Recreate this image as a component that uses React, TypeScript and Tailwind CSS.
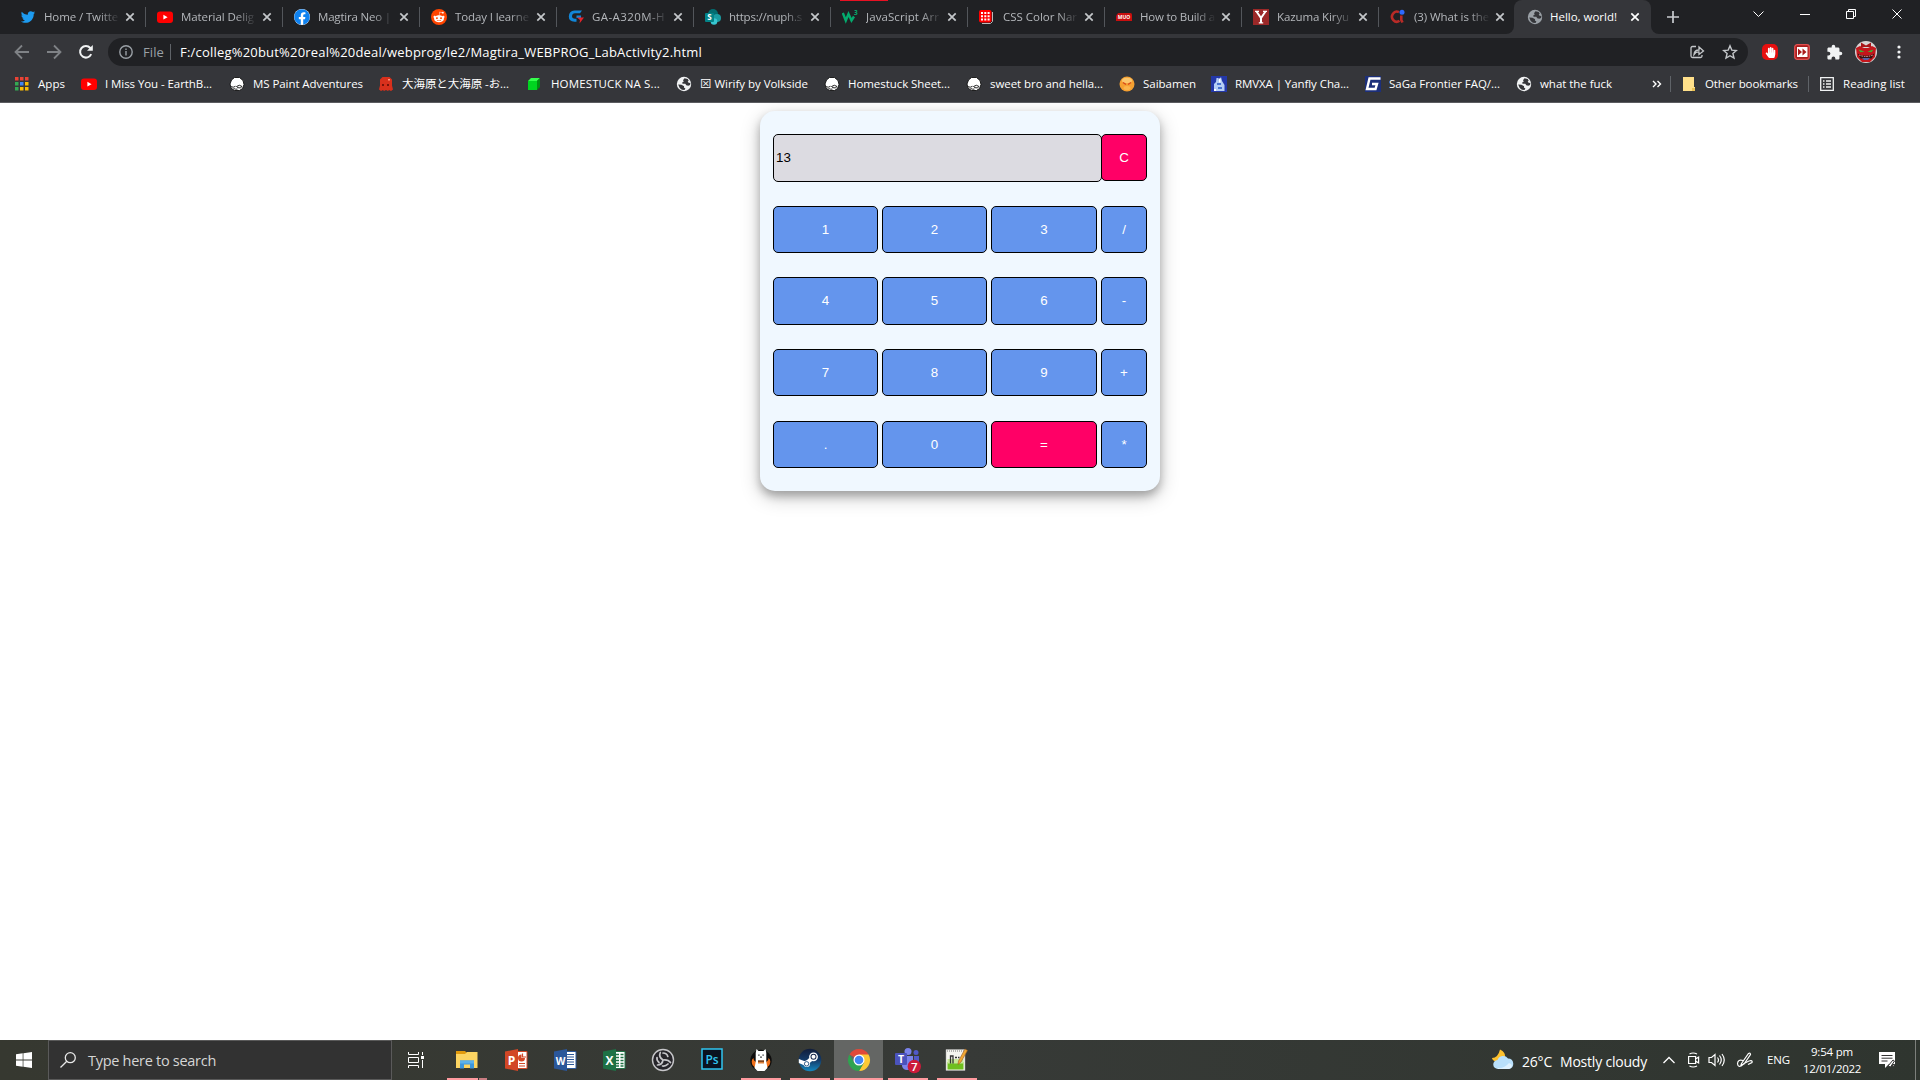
import React, { useLayoutEffect, useRef, useState } from "react";
import { FaFacebook, FaRedditAlien, FaTwitter, FaHandPaper } from "react-icons/fa";

/* Text set to a given width by spreading the difference over its letters. */
function Fit({ text, w, className = "" }: { text: string; w: number; className?: string }) {
  const ref = useRef<HTMLSpanElement>(null);
  const [spacing, setSpacing] = useState(0);
  useLayoutEffect(() => {
    const el = ref.current;
    if (el) setSpacing((w - el.getBoundingClientRect().width) / Array.from(text).length);
  }, [text, w]);
  return (
    <span className={"block shrink-0 whitespace-nowrap " + className} style={{ width: w }}>
      <span ref={ref} style={{ letterSpacing: spacing }}>{text}</span>
    </span>
  );
}

function YouTube() {
  return (
    <svg viewBox="0 0 16 16" className="size-4">
      <rect y="2.500" width="16" height="11.500" rx="3" fill="#f00" />
      <path d="M6.400 5.800v4.800L10.600 8.200z" fill="#fff" />
    </svg>
  );
}

function Globe({ color }: { color: string }) {
  return (
    <svg viewBox="0 0 16 16" className="size-4">
      <circle cx="8" cy="8" r="7.200" fill={color} />
      <path d="M8.500 2.200L7 4.200l.8 1.200-1.600 1 .3 1.300h2.800l1 1.600 2 .4 1.800-.6.300-2-1.800-.3-.9-1.300 1-.8-1-1.800z" fill="#35363a" />
      <path d="M2.200 8.500l3.300.3 2.600 1.500-.2 1.300 1.500.8-.9 1.500-2.600-.2-2.200-1.800z" fill="#35363a" />
    </svg>
  );
}

function Spaghetti() {
  return (
    <svg viewBox="0 0 16 16" className="size-4">
      <path d="M5.500 1.500h5l3.500 3 1 4-1.500 4-3 2h-5l-3.500-2.500L1 8l1.500-4z" fill="#fff" stroke="#111" strokeWidth=".9" />
      <path d="M1.500 10.500q3 1.500 5-.2M7.500 10.500q3-2.500 5.500 0-1.500 2.200-4 1.200zM4.500 12.500q2 1 4 .6" fill="none" stroke="#222" />
    </svg>
  );
}

function Gigabyte() {
  return (
    <svg viewBox="0 0 16 16" className="size-4">
      <path d="M14 1.500H6.500Q1 2 .8 7.500q0 5 5.700 5.300l2-.1V9.700H7Q4 9.500 4 7.300 4.200 4.500 7 4.300h5z" fill="#1286d8" />
      <path d="M8.500 6.500H13V9H8.500z" fill="#1286d8" />
      <path d="M9 8.500h7l-4.500 6 .5-3.500z" fill="#e3242b" />
    </svg>
  );
}

function SharePoint() {
  return (
    <svg viewBox="0 0 16 16" className="size-4">
      <circle cx="8" cy="5" r="5" fill="#036c70" />
      <circle cx="12" cy="9" r="4" fill="#1a9ba1" />
      <circle cx="9" cy="12.500" r="3.300" fill="#37c6d0" />
      <rect y="4" width="9" height="9" rx="1" fill="#038387" />
      <text x="4.500" y="11.300" textAnchor="middle" fontSize="8" fontWeight="700" fill="#fff" fontFamily="Open Sans, sans-serif">S</text>
    </svg>
  );
}

function W3() {
  return (
    <svg viewBox="0 0 16 16" className="size-4">
      <path d="M.8 4l3 7.500L6.500 5l3 6.500L12 7.500" fill="none" stroke="#04aa6d" strokeWidth="2.400" />
      <text x="12" y="6" fontSize="6.500" fontWeight="700" fill="#04aa6d" fontFamily="Open Sans, sans-serif">3</text>
    </svg>
  );
}

function Dice() {
  return (
    <svg viewBox="0 0 16 16" className="size-4">
      <path d="M3 14.500h8.500l2-2V3" stroke="#bbb" fill="none" />
      <rect x="0" y="1" width="12.500" height="12.500" rx="2" fill="#f00" />
      <path d="M2 3h2v2H2zM2 6.300h2v2H2zM2 9.600h2v2H2zM5.300 3h2v2h-2zM5.300 6.300h2v2h-2zM5.300 9.600h2v2h-2zM8.600 3h2v2h-2zM8.600 6.300h2v2h-2zM8.600 9.600h2v2h-2z" fill="#fff" />
    </svg>
  );
}

function Muo() {
  return (
    <svg viewBox="0 0 16 16" className="size-4">
      <path d="M3 4h11.500q1.500 0 1.500 2v6H0V7.500Q1 4 3 4z" fill="#c80f0f" />
      <text x="8" y="9.800" textAnchor="middle" fontSize="5" fontWeight="700" fill="#fff" fontFamily="Open Sans, sans-serif">MUO</text>
    </svg>
  );
}

function YTab() {
  return (
    <svg viewBox="0 0 16 16" className="size-4">
      <rect width="16" height="16" fill="#9b2828" />
      <path d="M3.500 2.500L8 9l4.500-6.500M8 8v6" fill="none" stroke="#fff" strokeWidth="2" />
      <path d="M2 2.300h4M10 2.300h4M5.800 13.800h4.400" stroke="#fff" strokeWidth="1.200" />
    </svg>
  );
}

function QTab() {
  return (
    <svg viewBox="0 0 16 16" className="size-4">
      <path d="M9 3.200A4.800 5 0 1 0 9.500 11.800M11.300 6.500V11l1.200 2.500" fill="none" stroke="#b92b27" strokeWidth="2.600" />
      <circle cx="12" cy="3.200" r="2.500" fill="#2e69ff" />
    </svg>
  );
}

function Cross({ color }: { color: string }) {
  return (
    <svg viewBox="0 0 10 10" className="size-[10px] shrink-0">
      <path d="M1.300 1.300l7.400 7.400M8.700 1.300L1.300 8.700" stroke={color} strokeWidth="1.700" />
    </svg>
  );
}

const tabs: { icon: React.ReactNode; text: string; w: number }[] = [
  { icon: <FaTwitter className="size-4 scale-90 text-[#1d9bf0]" />, text: "Home / Twitte", w: 74 },
  { icon: <YouTube />, text: "Material Delig", w: 73 },
  {
    icon: <span className="flex size-4 rounded-full bg-white"><FaFacebook className="size-4 text-[#0f82f0]" /></span>,
    text: "Magtira Neo |", w: 73,
  },
  {
    icon: <span className="flex size-4 items-center justify-center rounded-full bg-[#ff4500]"><FaRedditAlien className="size-3 text-white" /></span>,
    text: "Today I learne", w: 74,
  },
  { icon: <Gigabyte />, text: "GA-A320M-H", w: 73 },
  { icon: <SharePoint />, text: "https://nuph.s", w: 73 },
  { icon: <W3 />, text: "JavaScript Arr", w: 73 },
  { icon: <Dice />, text: "CSS Color Nar", w: 74 },
  { icon: <Muo />, text: "How to Build a", w: 75 },
  { icon: <YTab />, text: "Kazuma Kiryu", w: 72 },
  { icon: <QTab />, text: "(3) What is the", w: 75 },
];

function TabStrip() {
  return (
    <div className="flex h-[34px] bg-[#202124] pl-[9px] text-[11.500px]">
      {tabs.map((t, i) => (
        <div key={t.text} className="flex h-[34px] w-[137px] shrink-0 items-center pl-[11px]">
          {t.icon}
          <div className="ml-2 w-[76px] text-[#b4b7bb] [mask-image:linear-gradient(to_right,#000_72%,transparent)]">
            <Fit text={t.text} w={t.w} />
          </div>
          <div className="ml-[5px]"><Cross color="#c4c7ca" /></div>
          <div className={i === 10 ? "hidden" : "ml-auto h-5 w-px bg-[#53565b]"} />
        </div>
      ))}
      <div className="relative -ml-[2px] flex h-[34px] w-[137px] items-center rounded-t-lg bg-[#35363a] pl-[13px]">
        <span className="absolute -left-2 bottom-0 size-2 bg-[#35363a]"><span className="block size-2 rounded-br-lg bg-[#202124]" /></span>
        <span className="absolute -right-2 bottom-0 size-2 bg-[#35363a]"><span className="block size-2 rounded-bl-lg bg-[#202124]" /></span>
        <Globe color="#9aa0a6" />
        <Fit text="Hello, world!" w={67} className="ml-[7px] text-white" />
        <div className="ml-[13px]"><Cross color="#fff" /></div>
      </div>
      <div className="flex w-[44px] items-center justify-center">
        <svg viewBox="0 0 12 12" className="size-3"><path d="M6 0v12M0 6h12" stroke="#c9ccd0" strokeWidth="1.700" /></svg>
      </div>
      <svg viewBox="0 0 150 10" className="ml-[58px] mt-[9px] h-[10px] w-[150px]" fill="none" stroke="#fff">
        <path d="M.5 2.500l5 5 5-5M47 5.500h10" />
        <path d="M93.500 2.500h7v7h-7zM95.500 2.500v-2h7v7h-2" />
        <path d="M139.500.5l9 9M148.500.5l-9 9" />
      </svg>
    </div>
  );
}

function Arrow({ flip }: { flip?: boolean }) {
  return (
    <svg viewBox="0 0 16 16" className={flip ? "size-4 rotate-180" : "size-4"} fill="none" stroke="#7f8286" strokeWidth="1.800">
      <path d="M15 8H2M8 1.500L1.500 8 8 14.500" />
    </svg>
  );
}

function Toolbar() {
  return (
    <div className="flex h-[36px] items-center bg-[#35363a] pl-[14px]">
      <Arrow />
      <div className="ml-4"><Arrow flip /></div>
      <svg viewBox="0 0 16 16" className="ml-4 size-4" fill="none" stroke="#f1f3f4" strokeWidth="2">
        <path d="M13.200 10.200A5.800 5.800 0 1 1 12.300 4L13.500 5.500" /><path d="M14.800 1v5.800H9z" fill="#f1f3f4" stroke="none" />
      </svg>
      <div className="ml-[14px] flex h-7 w-[1640px] items-center rounded-full bg-[#202124] pl-[11px]">
        <svg viewBox="0 0 14 14" className="size-[14px]" fill="none" stroke="#9aa0a6" strokeWidth="1.400"><circle cx="7" cy="7" r="6.200" /><path d="M7 6v4.500M7 3.500V5" /></svg>
        <Fit text="File" w={21} className="ml-[10px] pt-px text-[13px] text-[#9aa0a6]" />
        <div className="ml-[6px] h-4 w-px bg-[#5f6368]" />
        <Fit text="F:/colleg%20but%20real%20deal/webprog/le2/Magtira_WEBPROG_LabActivity2.html" w={522} className="ml-[9px] pt-px text-[13px] text-white" />
        <svg viewBox="0 0 16 16" className="ml-[987px] size-4" fill="none" stroke="#c4c7ca" strokeWidth="1.300">
          <path d="M7 2.500H3.500Q2 2.500 2 4v8q0 1.500 1.500 1.500h8q1.500 0 1.500-1.500v-1" /><path d="M5 10.500q.5-4.500 5-4.500V3l4.500 4-4.500 3.500V8q-3-.3-5 2.500z" />
        </svg>
        <svg viewBox="0 0 16 16" className="ml-[17px] size-4" fill="none" stroke="#c4c7ca" strokeWidth="1.400"><path d="M8 1.800l1.800 4.300 4.600.4-3.500 3 1.100 4.600L8 11.700l-4 2.400 1.100-4.600-3.500-3 4.600-.4z" /></svg>
      </div>
      <span className="ml-[14px] flex size-4 items-center justify-center rounded-[5px] bg-[#e60f0f]"><FaHandPaper className="size-[11px] text-white" /></span>
      <svg viewBox="0 0 16 16" className="ml-4 size-4"><rect x=".7" y=".7" width="14.600" height="14.600" rx="2.500" fill="#a91c1c" stroke="#e05050" strokeWidth="1.300" /><rect x="3" y="3" width="10.500" height="10" fill="#fff" /><path d="M4 4.500L8 8l-4 3.500zM8.500 4.500l4 3.500-4 3.500z" fill="#a91c1c" /></svg>
      <svg viewBox="0 0 24 24" className="ml-4 size-[17px]" fill="#f1f3f4"><path d="M20.500 11H19V7c0-1.100-.9-2-2-2h-4V3.500a2.500 2.500 0 0 0-5 0V5H4c-1.100 0-2 .9-2 2v3.800h1.500a2.700 2.700 0 0 1 0 5.400H2V20c0 1.100.9 2 2 2h3.800v-1.500a2.700 2.700 0 0 1 5.400 0V22H17c1.100 0 2-.9 2-2v-4h1.500a2.500 2.500 0 0 0 0-5z" /></svg>
      <svg viewBox="0 0 22 22" className="ml-3 size-[22px]">
        <circle cx="11" cy="11" r="11" fill="#d8d4d4" />
        <path d="M1 7l4-2 4 2h4l4-2 4 2-1 9-5 5H7l-5-5z" fill="#c4161c" />
        <path d="M3.500 8.500l6 2-4 .8zM18.500 8.500l-6 2 4 .8z" fill="#38b838" />
        <path d="M2.500 12.500q8.500 4.500 17 0l-3 5h-11z" fill="#35110f" /><path d="M4 14q7 3 14 0" stroke="#e8a0a0" fill="none" strokeDasharray="1.500 1" />
        <path d="M7 17h8l-2 2H9z" fill="#5360a8" /><path d="M6 1.500l5 3 5-3v4.500H6z" fill="#a81418" />
      </svg>
      <svg viewBox="0 0 4 14" className="ml-5 h-[14px] w-1" fill="#f1f3f4"><circle cx="2" cy="2" r="1.600" /><circle cx="2" cy="7" r="1.600" /><circle cx="2" cy="12" r="1.600" /></svg>
    </div>
  );
}

const bookmarks: { icon: React.ReactNode; text: string; w: number; slot: string }[] = [
  {
    icon: (
      <svg viewBox="0 0 16 16" className="size-4">
        <path d="M1 1h3.500v3.500H1zM6 1h3.500v3.500H6zM11 1h3.500v3.500H11z" fill="#ea4335" />
        <path d="M1 6h3.500v3.500H1zM1 11h3.500v3.500H1z" fill="#34a853" /><path d="M6 6h3.500v3.500H6z" fill="#4285f4" />
        <path d="M11 6h3.500v3.500H11zM11 11h3.500v3.500H11zM6 11h3.500v3.500H6z" fill="#fbbc04" />
      </svg>
    ),
    text: "Apps", w: 27, slot: "w-[67px]",
  },
  { icon: <YouTube />, text: "I Miss You - EarthB...", w: 107, slot: "w-[148px]" },
  { icon: <Spaghetti />, text: "MS Paint Adventures", w: 110, slot: "w-[149px]" },
  {
    icon: (
      <svg viewBox="0 0 16 16" className="size-4">
        <path d="M4.500 1h7L14 3.500v6l1 4-2 1.500-2-1-1 1-2-1-2 1-1-1-2 1-2-1.500 1-4v-6z" fill="#d8301c" />
        <path d="M4 8h2v2H4zM9 8h2v2H9z" fill="#7a1208" /><path d="M10 3h2v1.500h-2z" fill="#ff9a80" />
      </svg>
    ),
    text: "大海原と大海原 -お...", w: 107, slot: "w-[149px]",
  },
  {
    icon: <svg viewBox="0 0 16 16" className="size-4"><path d="M1 5h9v9H1z" fill="#00d420" /><path d="M1 5l3-3h9l-3 3z" fill="#35ff4c" /><path d="M10 5l3-3v9l-3 3z" fill="#008f10" /></svg>,
    text: "HOMESTUCK NA S...", w: 109, slot: "w-[149px]",
  },
  { icon: <Globe color="#f1f3f4" />, text: "⊠ Wirify by Volkside", w: 108, slot: "w-[148px]" },
  { icon: <Spaghetti />, text: "Homestuck Sheet...", w: 102, slot: "w-[142px]" },
  { icon: <Spaghetti />, text: "sweet bro and hella...", w: 113, slot: "w-[153px]" },
  {
    icon: <svg viewBox="0 0 16 16" className="size-4"><circle cx="8" cy="8" r="7.500" fill="#f5a031" /><ellipse cx="8" cy="4.500" rx="5" ry="2.700" fill="#fbc66c" /><path d="M4 6.500l3 2M12 6.500l-3 2" stroke="#d8491c" strokeWidth="1.400" /><ellipse cx="8" cy="12" rx="3.500" ry="2" fill="#fbb54c" /></svg>,
    text: "Saibamen", w: 53, slot: "w-[92px]",
  },
  {
    icon: <svg viewBox="0 0 16 16" className="size-4"><rect width="16" height="16" fill="#2438a8" /><path d="M3 15V8l2-2 .5-4h2L8 4l2-3 1 4 2.500 4v6z" fill="#b5cef5" /><path d="M6 7h4v2H6zM7 11h4v2H7z" fill="#4a74d0" /><path d="M3 13h2v2H3zM8 2.500h1.500v4H8z" fill="#fff" /></svg>,
    text: "RMVXA | Yanfly Cha...", w: 114, slot: "w-[154px]",
  },
  {
    icon: <svg viewBox="0 0 16 16" className="size-4"><rect width="16" height="16" fill="#1c2f7a" /><path d="M15.500 2.500H4.500L2 13h8.500L12 8H7" fill="none" stroke="#fff" strokeWidth="2.400" /></svg>,
    text: "SaGa Frontier FAQ/...", w: 111, slot: "w-[151px]",
  },
  { icon: <Globe color="#f1f3f4" />, text: "what the fuck", w: 72, slot: "w-[136px]" },
];

function Bookmarks() {
  return (
    <div className="flex h-[33px] items-center border-b border-[#5b5c60] bg-[#35363a] pb-[4px] pl-[14px] text-[11.500px] text-white">
      {bookmarks.map((b) => (
        <div key={b.text} className={"flex shrink-0 items-center gap-2 " + b.slot}>
          {b.icon}
          <Fit text={b.text} w={b.w} />
        </div>
      ))}
      <svg viewBox="0 0 10 8" className="h-2 w-[10px]" fill="none" stroke="#fff" strokeWidth="1.400"><path d="M1 1l3 3-3 3M5.500 1l3 3-3 3" /></svg>
      <div className="ml-[8px] h-4 w-px bg-[#5f6368]" />
      <svg viewBox="0 0 14 14" className="ml-[11px] size-[14px]"><path d="M1 0h11v10h1v4H1z" fill="#ffe08a" /><path d="M10 14v-3h3v3z" fill="#eac255" /></svg>
      <Fit text="Other bookmarks" w={93} className="ml-[9px]" />
      <div className="ml-[10px] h-4 w-px bg-[#5f6368]" />
      <svg viewBox="0 0 14 14" className="ml-[11px] size-[14px]" fill="none" stroke="#f1f3f4" strokeWidth="1.300"><path d="M.7.700h12.600v12.600H.7zM3 4h1.500M6 4h5M3 7h1.500M6 7h5M3 10h1.500M6 10h5" /></svg>
      <Fit text="Reading list" w={62} className="ml-[9px]" />
    </div>
  );
}

const rows = [
  { keys: ["1", "2", "3", "/"], size: "h-[47px] mt-6" },
  { keys: ["4", "5", "6", "-"], size: "h-[48px] mt-6" },
  { keys: ["7", "8", "9", "+"], size: "h-[47px] mt-6" },
  { keys: [".", "0", "=", "*"], size: "h-[47px] mt-[25px]" },
];

function Calculator() {
  return (
    <div className="mx-auto h-[380px] w-[400px] rounded-[15px] bg-[#f0f8ff] px-[13px] pt-[23px] font-['Liberation_Sans',Arial,sans-serif] text-[13.330px] shadow-[0_5px_8px_rgba(0,0,0,0.25),0_6px_20px_rgba(0,0,0,0.22)]">
      <div className="flex h-[48px] items-start">
        <div className="flex h-[48px] w-[329px] items-center rounded-[5px] border border-black bg-[#dcdbe1] pl-[2px] text-black">13</div>
        <button className="-ml-px h-[47px] w-[46px] rounded-[5px] border border-black bg-[#ff0066] text-white">C</button>
      </div>
      {rows.map((r) => (
        <div key={r.keys[0]} className={"grid grid-cols-[105px_105px_106px_46px] gap-x-1 " + r.size}>
          {r.keys.map((k) => (
            <button key={k} className={(k === "=" ? "bg-[#ff0066]" : "bg-[#6495ed]") + " rounded-[5px] border border-black text-white"}>{k}</button>
          ))}
        </div>
      ))}
    </div>
  );
}

function Office({ letter, color, dark }: { letter: string; color: string; dark: string }) {
  return (
    <svg viewBox="0 0 24 24" className="size-6">
      <path d="M12 3.500h11v17H12z" fill="#fff" stroke={color} />
      {letter === "P" && <path d="M17.500 6.500a3.500 3.500 0 1 0 3.500 3.500h-3.500z" fill={color} />}
      {letter === "P" && <path d="M18.500 5.500v3.500h3.500M15 15.500h6M15 18h6" fill="none" stroke={color} strokeWidth="1.200" />}
      {letter === "W" && <path d="M14 6.500h7M14 9h7M14 11.500h7M14 14h7M14 16.500h7" stroke={color} strokeWidth="1.200" />}
      {letter === "X" && <path d="M14 6.500h3M18.500 6.500h3M14 9.500h3M18.500 9.500h3M14 12.500h3M18.500 12.500h3M14 15.500h3M18.500 15.500h3M14 18h3M18.500 18h3" stroke={color} strokeWidth="1.700" />}
      <path d="M1 3.500l13-2.500v22L1 20.500z" fill={dark} />
      <text x="7.500" y="16.500" textAnchor="middle" fontSize={letter === "W" ? 10 : 12} fontWeight="700" fill="#fff" fontFamily="Open Sans, sans-serif">{letter}</text>
    </svg>
  );
}

const apps: { id: string; icon: React.ReactNode; line: boolean; active?: boolean }[] = [
  {
    id: "explorer", line: true,
    icon: (
      <svg viewBox="0 0 24 24" className="size-6">
        <path d="M1 3h9l2 2h10v4H1z" fill="#e29a0c" /><path d="M1 6h9l2-2h10.500v16H1z" fill="#fcd462" />
        <path d="M5 20.500v-8h14v8h-4v-4H9v4z" fill="#3d96dc" /><path d="M5 12.500h14v3H5z" fill="#5cb1ea" />
      </svg>
    ),
  },
  { id: "powerpoint", line: false, icon: <Office letter="P" color="#d24726" dark="#d24726" /> },
  { id: "word", line: false, icon: <Office letter="W" color="#2b579a" dark="#2b579a" /> },
  { id: "excel", line: false, icon: <Office letter="X" color="#217346" dark="#1e7145" /> },
  {
    id: "obs", line: false,
    icon: (
      <svg viewBox="0 0 24 24" className="size-6" fill="none" stroke="#c6c6c9" strokeWidth="1.700" strokeLinecap="round">
        <circle cx="12" cy="12" r="10.500" fill="#26252a" strokeWidth="1.400" />
        <path d="M9.300 4.500q-2 4.500 2.700 7.500M12 12q5-.8 7.500 2.500M12 12q-.8 5-5.500 5M6 9.500q-.5 3 2 5M12 5q3.800 0 4.800 3.500M17 16q-2.500 2.500-5.500 2" />
      </svg>
    ),
  },
  {
    id: "photoshop", line: false,
    icon: (
      <svg viewBox="0 0 24 24" className="size-6 -translate-y-px">
        <rect x="2" y="2" width="20" height="20" fill="#0a1220" stroke="#31c5f0" strokeWidth="1.500" />
        <text x="12" y="16.500" textAnchor="middle" fontSize="12" fontWeight="600" fill="#31c5f0" fontFamily="Open Sans, sans-serif">Ps</text>
      </svg>
    ),
  },
  {
    id: "llama", line: true,
    icon: (
      <svg viewBox="0 0 24 24" className="size-6">
        <circle cx="12" cy="12.500" r="10.700" fill="#0d0c0c" />
        <path d="M3.500 17q-2-5 1-7 0 3 3 4l-1 6zM20.500 17q2-5-1-7 0 3-3 4l1 6z" fill="#f0701a" />
        <path d="M7.500 1l2 2h5l2-2 .8 4v9l1.200 6-3 3h-7l-3-3L6.700 14V5z" fill="#fff" />
        <path d="M9.300 6.500h1.200v1.200H9.300zM13.500 6.500h1.200v1.200h-1.200zM11.200 8.500h1.600v1.300h-1.600z" fill="#222" /><path d="M9 12.500h6v3H9z" fill="#d9803c" /><path d="M9 12.500h6v1.200H9z" fill="#5a2c14" />
      </svg>
    ),
  },
  {
    id: "steam", line: true,
    icon: (
      <svg viewBox="0 0 24 24" className="size-6">
        <defs><linearGradient id="steam" x1="0" y1="0" x2="0" y2="1"><stop offset="0" stopColor="#111d3a" /><stop offset=".5" stopColor="#143a68" /><stop offset="1" stopColor="#1488c0" /></linearGradient></defs>
        <circle cx="12" cy="12" r="11.300" fill="url(#steam)" />
        <path d="M.8 12l5.500 2.500 5.500-5 3 3-5 4z" fill="#fff" /><path d="M.8 11v4l7 3 1-4z" fill="#fff" />
        <circle cx="15.500" cy="8.800" r="4.400" fill="#fff" /><circle cx="15.500" cy="8.800" r="3" fill="#17284c" /><circle cx="15.500" cy="8.800" r="2" fill="#fff" />
        <circle cx="8.800" cy="15.800" r="3.200" fill="#fff" /><circle cx="8.600" cy="15.800" r="2.200" fill="none" stroke="#1a4a7a" strokeWidth=".9" />
      </svg>
    ),
  },
  {
    id: "chrome", line: true, active: true,
    icon: (
      <svg viewBox="0 0 24 24" className="size-6">
        <path d="M12 12L2.470 6.500A11 11 0 0 1 21.530 6.500z" fill="#e0493a" />
        <path d="M12 6.500h9.530A11 11 0 0 1 12 23l4.800-8.200z" fill="#fcc934" />
        <path d="M2.470 6.500A11 11 0 0 0 12 23l4.800-8.200L12 12 7.200 14.800z" fill="#2fa350" />
        <circle cx="12" cy="12" r="5.500" fill="#fff" /><circle cx="12" cy="12" r="4.300" fill="#4285f4" />
      </svg>
    ),
  },
  {
    id: "teams", line: true,
    icon: (
      <svg viewBox="0 0 27 26" className="h-[26px] w-[27px] translate-y-px">
        <circle cx="14" cy="3.500" r="3.500" fill="#7b83eb" /><circle cx="22" cy="4.500" r="2.500" fill="#5059c9" />
        <path d="M9 8h10v9q-1 5-6 5-4 0-5-4z" fill="#7b83eb" /><path d="M20 8h5v7q-1 3-5 3z" fill="#5059c9" />
        <rect x="1" y="5" width="12" height="12" rx="1" fill="#4b53bc" />
        <text x="7" y="15" textAnchor="middle" fontSize="10.500" fontWeight="700" fill="#fff" fontFamily="Open Sans, sans-serif">T</text>
        <circle cx="20.300" cy="18.500" r="6.700" fill="#cc1a3a" />
        <text x="20.300" y="22.700" textAnchor="middle" fontSize="11.500" fontWeight="600" fill="#fff" fontFamily="Open Sans, sans-serif">7</text>
      </svg>
    ),
  },
  {
    id: "notepad", line: true,
    icon: (
      <svg viewBox="0 0 24 24" className="size-6 -translate-x-px">
        <path d="M2 1.500h19v21H2z" fill="#f5f5f0" stroke="#aaa" strokeWidth=".5" />
        <path d="M3.500 14h16v7.500h-16z" fill="#6fbf1f" /><path d="M3.500 11h16v4.500h-16z" fill="#c9e89a" />
        <path d="M3 3h17" stroke="#777" strokeDasharray="1 1" /><path d="M6.500 15.500V8h2.500v7.500M11 9.500h2M14 9.500h1.500" stroke="#333" fill="none" strokeWidth="1.300" />
        <path d="M21 1l2.500 1.500L17 14l-3 2.500.5-3.500z" fill="#f0a834" stroke="#9a5a20" strokeWidth=".6" />
      </svg>
    ),
  },
];

function Taskbar() {
  return (
    <div className="flex h-10 shrink-0 items-center bg-linear-to-r from-[#363830] via-[#373a37] to-[#2f352f] text-white">
      <div className="flex w-12 justify-center">
        <svg viewBox="0 0 16 16" className="size-4" fill="#fff"><path d="M0 2.200l6.700-.9v6.300H0zM7.400 1.200L16 0v7.600H7.400zM0 8.400h6.700v6.300L0 13.800zM7.400 8.400H16V16l-8.600-1.200z" /></svg>
      </div>
      <div className="flex h-10 w-[344px] items-center border border-[#5a5a5a] bg-[#323232] pl-[11px]">
        <svg viewBox="0 0 16 16" className="size-4" fill="none" stroke="#e8e8e8" strokeWidth="1.300"><circle cx="10.300" cy="5.700" r="5" /><path d="M6.800 9.200L.5 15.500" /></svg>
        <Fit text="Type here to search" w={128} className="ml-3 pt-px text-[14.500px] text-[#d6d6d6]" />
      </div>
      <div className="flex w-[50px] justify-center pr-[2px]">
        <svg viewBox="0 0 16 16" className="size-4" fill="none" stroke="#fff"><path d="M.5 0v2.500h10V0M.5 5.500h10v5H.5zM.5 16v-2.500h10V16M14.500 0v3M14.500 8v8" /><path d="M13 4h3v3h-3z" fill="#fff" stroke="none" /></svg>
      </div>
      {apps.map((a) => (
        <div key={a.id} className={"relative flex h-10 w-[49px] shrink-0 items-center justify-center " + (a.active ? "bg-[#646664]" : "")}>
          {a.icon}
          {a.line && <span className={"absolute bottom-0 h-[2px] bg-[#ff9a9f] " + (a.active ? "inset-x-0" : "left-[5px] w-10")} />}
          {a.id === "explorer" && <span className="absolute right-[4px] bottom-0 h-[2px] w-[9px] border-l border-[#373a37] bg-[#c97d82]" />}
        </div>
      ))}
      <svg viewBox="0 0 24 24" className="ml-[510px] size-6">
        <path d="M9 1.500q6 2.500 5 8.500L5 14Q1 12 1 10q6 0 8-8.500z" fill="#fdc12e" />
        <path d="M7 21a4.500 4.500 0 0 1-.5-9A6 6 0 0 1 17 10.500a5.300 5.300 0 0 1 1 10.500z" fill="#b9e0fb" /><path d="M7 20q6 1 11-5 3 1 3 3-1 3-3 3H7z" fill="#dff2ff" />
      </svg>
      <Fit text="26°C" w={30} className="ml-[7px] pt-[2px] text-[14px]" />
      <Fit text="Mostly cloudy" w={87} className="ml-2 pt-[2px] text-[14px]" />
      <svg viewBox="0 0 12 8" className="ml-[16px] h-2 w-3" fill="none" stroke="#fff" strokeWidth="1.300"><path d="M.5 7L6 1.500 11.500 7" /></svg>
      <svg viewBox="0 0 14 16" className="ml-3 h-4 w-[14px]" fill="none" stroke="#fff" strokeWidth="1.200"><path d="M1.600 4.500h7v7h-7zM8.600 7l3-2v6l-3-2M2.500 2Q6 0 10 2M2.500 14q3.500 2 7.500 0" /></svg>
      <svg viewBox="0 0 18 16" className="ml-[7px] h-4 w-[18px]" fill="none" stroke="#fff" strokeWidth="1.200"><path d="M1 5.500h2.500L7 2.500v11l-3.500-3H1zM9.500 5.500q2 2.500 0 5M11.500 3.500q3.500 4.500 0 9M14 2q4.500 6 0 12" /></svg>
      <svg viewBox="0 0 18 16" className="ml-[10px] h-4 w-[18px]" fill="none" stroke="#fff" strokeWidth="1.200"><path d="M5.500 11.500L12.500 1.500q2-1 2 1L8 12l-3 1zM7 8.500Q2 7 1.500 11.500 2 15.500 5 14q4-3.500 8-5 4-1 3 1.500l-4 2" /></svg>
      <Fit text="ENG" w={23} className="ml-[13px] text-[11.500px]" />
      <div className="ml-[13px] flex w-[58px] flex-col items-center text-[11.500px] leading-[17px]">
        <Fit text="9:54 pm" w={42} />
        <Fit text="12/01/2022" w={58} />
      </div>
      <svg viewBox="0 0 18 18" className="ml-[17px] size-[18px]"><path d="M1 1h16v12h-6l-4 4v-4H1z" fill="#fff" /><path d="M3.500 4.500h11M3.500 7.200h11M3.500 10h6" stroke="#333" /><path d="M10 15l5-6 1.500 1-4 6zM14 15.500q3 .5 3-2.500" stroke="#333" fill="#fff" /></svg>
      <div className="ml-auto mr-1 h-10 w-px bg-[#7c7f7b]" />
    </div>
  );
}

export default function App() {
  return (
    <div className="flex h-[1080px] w-[1920px] flex-col overflow-hidden bg-white font-['Open_Sans','Noto_Sans_CJK_JP',sans-serif]">
      <div className="relative shrink-0">
        <TabStrip />
        <Toolbar />
        <Bookmarks />
        <div className="absolute left-[840px] top-0 h-px w-12 bg-[#e81123]" />
      </div>
      <main className="flex-1 pt-2"><Calculator /></main>
      <Taskbar />
    </div>
  );
}
